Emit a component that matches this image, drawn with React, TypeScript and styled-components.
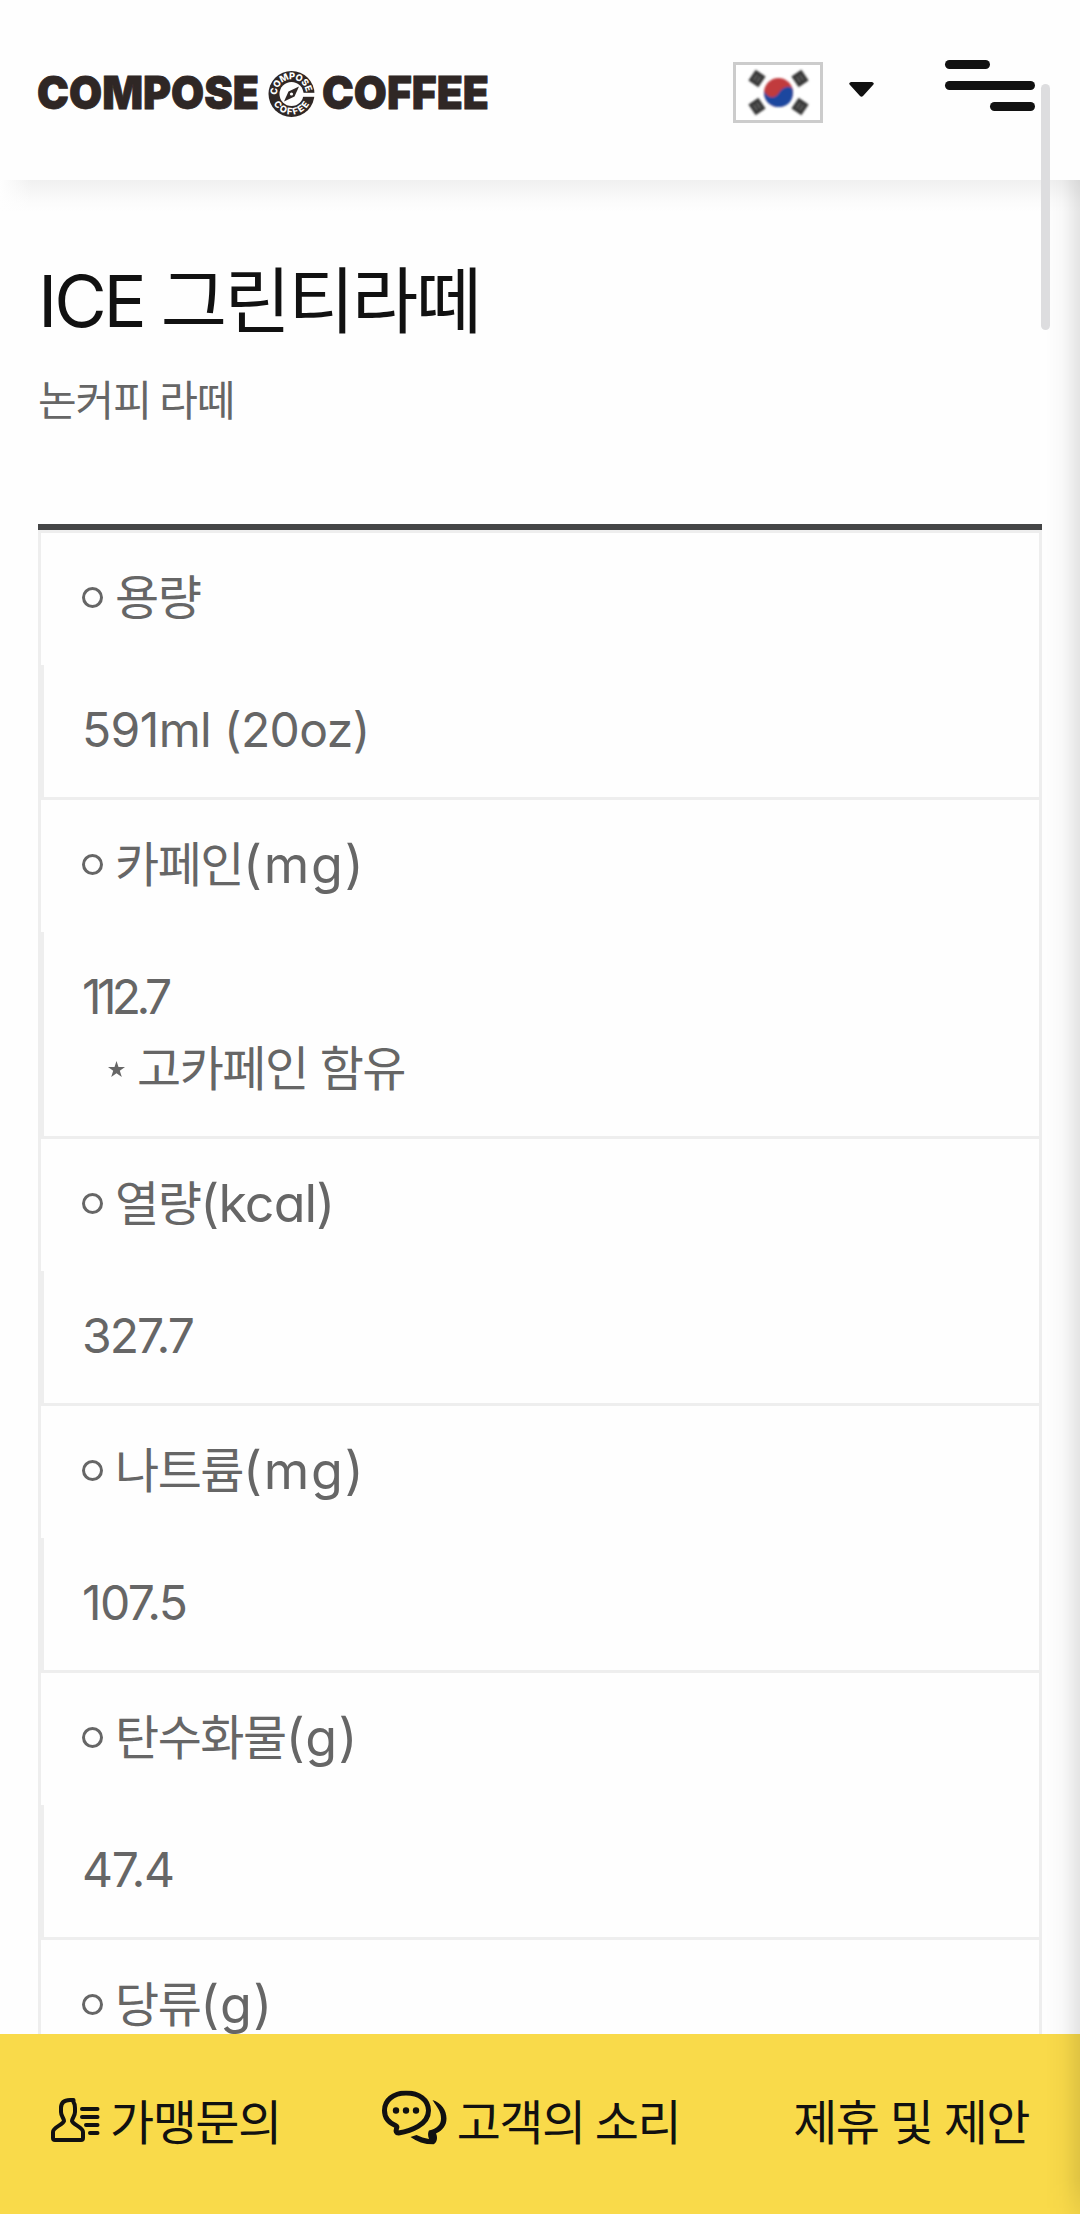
import React from 'react';
import styled, { createGlobalStyle } from 'styled-components';

const Global = createGlobalStyle`
  * { box-sizing: border-box; }
  html, body { margin: 0; padding: 0; background: #fefefe; }
  body { height: 2214px; overflow: hidden; }
  #root { height: 100%; }
`;

const latin = `Inter, "Noto Sans CJK KR", sans-serif`;

const Page = styled.div`
  position: relative;
  display: flex;
  flex-direction: column;
  width: 1080px;
  height: 2214px;
  overflow: hidden;
  background: #fefefe;
  color: #666;
  font-family: "Noto Sans CJK KR", sans-serif;
  letter-spacing: -1.5px;
`;

const Header = styled.header`
  position: relative;
  z-index: 3;
  flex: none;
  display: flex;
  align-items: flex-start;
  height: 180px;
  padding: 60px 45px 0 37px;
  background: #fefefe;
`;

const HeaderShade = styled.div`
  flex: none;
  height: 32px;
  background:
    linear-gradient(to right, #fefefe, rgba(254,254,254,0) 32px),
    linear-gradient(#f0f0f0, #f6f6f6 35%, #fbfbfb 65%, #fefefe);
`;

const LogoLink = styled.a`
  display: flex;
  margin-right: auto;
`;

const LogoArt = styled.svg`
  overflow: visible;
`;

const Flag = styled.span`
  display: flex;
  width: 90px;
  height: 61px;
  margin: 2px 26px 0 0;
  border: 3px solid #ccc;
  background: #fff;
`;

const Caret = styled.svg`
  width: 25px;
  height: 15px;
  margin: 22px 71px 0 0;
`;

const MenuButton = styled.button`
  display: flex;
  flex-direction: column;
  justify-content: space-between;
  width: 90px;
  height: 51px;
  padding: 0;
  border: 0;
  background: none;
`;

const MenuBar = styled.span<{ $half?: boolean; $end?: boolean }>`
  width: ${p => (p.$half ? '45px' : '90px')};
  height: 9px;
  border-radius: 5px;
  background: #111;
  align-self: ${p => (p.$end ? 'flex-end' : 'flex-start')};
`;

const Content = styled.main`
  flex: 1;
  min-height: 0;
  overflow: hidden;
  padding: 35px 38px 0;
`;

const Title = styled.h1`
  margin: 0;
  font: 400 72px/108px ${latin};
  letter-spacing: -2.5px;
  color: #111;
`;

const Category = styled.p`
  margin: 10px 0 93px;
  font: 400 42px/66px "Noto Sans CJK KR", sans-serif;
  letter-spacing: -1.05px;
`;

const Table = styled.dl`
  margin: 0;
  border-top: 6px solid #444546;
`;

const Rows = styled.div`
  border: 3px solid #eee;
`;

const Row = styled.div`
  border-bottom: 3px solid #eee;
  font: 400 48px/72px ${latin};
`;

const Label = styled.dt`
  display: flex;
  align-items: center;
  height: 132px;
  padding: 0 41px 3px;
`;

const Ring = styled.i`
  width: 21px;
  height: 21px;
  margin: 0 12px 0 0;
  border: 3px solid #666;
  border-radius: 50%;
`;

const Value = styled.dd`
  margin: 0;
  padding: 29px 38px 31px;
  border-left: 3px solid #eee;
`;

const Note = styled.div`
  display: flex;
  align-items: center;
  padding-left: 26px;
`;

const Star = styled.svg`
  width: 17px;
  height: 16px;
  margin-right: 12px;
`;

const Run = styled.span<{ $track: number; $size?: number }>`
  font-size: ${p => p.$size ?? 48}px;
  letter-spacing: ${p => p.$track}px;
  font-feature-settings: "cv11";
`;

const BottomBar = styled.nav`
  flex: none;
  display: flex;
  align-items: center;
  height: 180px;
  padding: 0 50px 10px 51px;
  background: #f9da4a;
`;

const BottomLink = styled.a<{ $gap: number; $space?: number }>`
  display: flex;
  align-items: center;
  margin-right: ${p => p.$gap}px;
  color: #111;
  font-size: 48px;
  line-height: 72px;
  word-spacing: ${p => p.$space ?? 0}px;
  white-space: nowrap;
`;

const BottomIcon = styled.svg<{ $w: number; $h: number; $lift: number }>`
  width: ${p => p.$w}px;
  height: ${p => p.$h}px;
  margin-right: 10px;
  transform: translateY(${p => p.$lift}px);
`;

const EdgeShade = styled.div`
  position: absolute;
  z-index: 2;
  top: 180px;
  right: 0;
  bottom: 0;
  width: 34px;
  background: linear-gradient(to right, rgba(0,0,0,0), rgba(0,0,0,0.025) 50%, rgba(0,0,0,0.1));
  mask-image: linear-gradient(to top, rgba(0,0,0,0.4), #000 36px);
`;

const ScrollThumb = styled.div`
  position: absolute;
  z-index: 4;
  top: 84px;
  left: 1041px;
  width: 9px;
  height: 246px;
  border-radius: 5px;
  background: #dddddf;
`;

const Logo = () => (
  <LogoArt width="454" height="64" viewBox="37 60 454 64" fill="#2f2725">
    <g fontFamily="Inter" fontWeight="900" fontSize="45" letterSpacing="0" stroke="#2f2725" strokeWidth="0.8">
      <text x="37" y="108.500" textLength="222" lengthAdjust="spacingAndGlyphs">COMPOSE</text>
      <text x="322" y="108.500" textLength="167" lengthAdjust="spacingAndGlyphs">COFFEE</text>
    </g>
    <circle cx="291.500" cy="94" r="23" />
    <circle cx="291.500" cy="94" r="12" fill="#fefefe" />
    <path d="M300 92.800h16v4h-16z" fill="#fefefe" />
    <path d="M299 86.500L294.500 96.500L284 101.500L288.500 91.500Z" />
    <circle cx="291.500" cy="94" r="1.600" fill="#fefefe" />
    <defs>
      <path id="arcTop" d="M278.100 99.400A14.500 14.500 0 1 1 304.900 99.400" />
      <path id="arcBottom" d="M271 94a20.500 20.500 0 0 0 41 0" />
    </defs>
    <g fontFamily="Inter" fontWeight="800" fontSize="9.200" fill="#fefefe" textAnchor="middle">
      <text letterSpacing="-0.500"><textPath href="#arcTop" startOffset="47%">COMPOSE</textPath></text>
      <text letterSpacing="1.500"><textPath href="#arcBottom" startOffset="51%">COFFEE</textPath></text>
    </g>
  </LogoArt>
);

const Trigram = ({ x, y, r }: { x: number; y: number; r: number }) => (
  <g transform={`translate(${x} ${y}) rotate(${r})`}>
    <rect x="-6.500" y="-6" width="13" height="12" fill="#383838" />
    <path d="M-3 -1.800h6M-3 1.800h6" stroke="#777" strokeWidth="1" />
  </g>
);

const KoreaFlag = () => (
  <svg width="84" height="55" viewBox="0 0 84 55">
    <defs><filter id="soft"><feGaussianBlur stdDeviation="0.9" /></filter></defs>
    <g filter="url(#soft)">
      <Trigram x={21} y={13.5} r={-56} />
      <Trigram x={64} y={13.5} r={56} />
      <Trigram x={21} y={41.5} r={56} />
      <Trigram x={64} y={41.5} r={-56} />
      <circle cx="42.500" cy="27.500" r="14.500" fill="#c13a3e" />
      <path d="M28.200 25.500C30 32 38 35 42.500 28.500C46 22 54 19.500 56.500 24C58.500 35 52 42 42.500 42C33 42 27 34 28.200 25.500z" fill="#1c469f" />
    </g>
  </svg>
);

const PersonIcon = () => (
  <BottomIcon $w={49} $h={44} $lift={1} viewBox="0 0 49 44" fill="none" stroke="#111" strokeWidth="4" strokeLinejoin="round" strokeLinecap="round">
    <path d="M22.500 2H19c-6 0-9 3-9 8v4c0 4 3 6 3 9-1 4-11 6-11 11v6q0 2 2 2h26q2 0 2-2v-6c0-5-10-7-11-11 0-3 3-5 3-9v-4q0-4-1.500-6z" />
    <path d="M31 11h15.500M31 19h15.500M35 27h11.500M39 35h7.500" />
  </BottomIcon>
);

const ChatIcon = () => (
  <BottomIcon $w={65} $h={54} $lift={-1.5} viewBox="0 0 65 54" fill="none" stroke="#111" strokeWidth="5" strokeLinejoin="round">
    <path d="M24 2.500C11 2.500 2.500 10 2.500 20c0 7 4 12 11 15 2 1 2 1 1 3-1 3 0 4.500 2 4.500 12-2 30-8 30-22.500C46.500 9 37 2.500 24 2.500z" />
    <g fill="#111" stroke="none">
      <circle cx="14" cy="20" r="3.200" /><circle cx="24" cy="20" r="3.200" /><circle cx="34" cy="20" r="3.200" />
      <path d="M50.500 9.500c9 3 14 10 14 18.500 0 7-4 12-10.500 15 2 4 1 9-2.500 11-9 0-17-3-23-7.500l6-2c4 2 8 3 12.500 4-1.500-4-1-6.500 0-8.500 8-2 12-6 12-12 0-7-3-10-8.500-18.500z" />
    </g>
  </BottomIcon>
);

type Item = { ko: string; unit?: string; unitTrack?: number; value?: string; track?: number; note?: string };
const items: Item[] = [
  { ko: '용량', value: '591ml (20oz)', track: -0.6 },
  { ko: '카페인', unit: '(mg)', unitTrack: 1.8, value: '112.7', track: -4.6, note: '고카페인 함유' },
  { ko: '열량', unit: '(kcal)', unitTrack: -0.9, value: '327.7', track: -1.9 },
  { ko: '나트륨', unit: '(mg)', unitTrack: 1.8, value: '107.5', track: -1.6 },
  { ko: '탄수화물', unit: '(g)', unitTrack: 1.3, value: '47.4', track: -1.3 },
  { ko: '당류', unit: '(g)', unitTrack: 1.3 },
];

export default function App() {
  return (
    <Page>
      <Global />
      <Header>
        <LogoLink><Logo /></LogoLink>
        <Flag><KoreaFlag /></Flag>
        <Caret viewBox="0 0 25 15"><path d="M2 0h21q3 1 1 3L14 14q-1.500 1.500-3 0L1 3Q-1 1 2 0z" fill="#111" /></Caret>
        <MenuButton aria-label="menu">
          <MenuBar $half /><MenuBar /><MenuBar $half $end />
        </MenuButton>
      </Header>
      <HeaderShade />
      <Content>
        <Title><Run $size={72} $track={-3.2}>ICE </Run>그린티라떼</Title>
        <Category>논커피 라떼</Category>
        <Table>
          <Rows>
            {items.map(it => (
              <Row key={it.ko}>
                <Label><Ring />{it.ko}{it.unit && <Run $size={52} $track={it.unitTrack ?? 0}>{it.unit}</Run>}</Label>
                {it.value && (
                  <Value>
                    <Run $track={it.track ?? -1.5}>{it.value}</Run>
                    {it.note && (
                      <Note>
                        <Star viewBox="0 0 17 16"><path d="M8.500 0l2 6H17l-5.200 3.800 2 6.200-5.300-3.800L3.200 16l2-6.200L0 6h6.500z" fill="#666" /></Star>
                        {it.note}
                      </Note>
                    )}
                  </Value>
                )}
              </Row>
            ))}
          </Rows>
        </Table>
      </Content>
      <BottomBar>
        <BottomLink $gap={101}><PersonIcon />가맹문의</BottomLink>
        <BottomLink $gap={113} $space={1}><ChatIcon />고객의 소리</BottomLink>
        <BottomLink $gap={0} $space={2}>제휴 및 제안</BottomLink>
      </BottomBar>
      <EdgeShade />
      <ScrollThumb />
    </Page>
  );
}
